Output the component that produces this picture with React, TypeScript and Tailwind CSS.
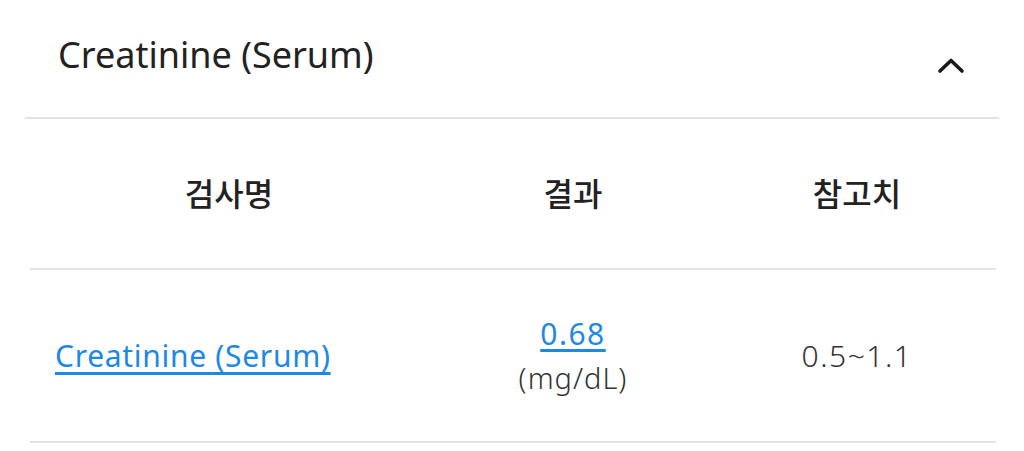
import React from 'react';

export default function App() {
    return (
        <div className="w-[1024px] h-[451px] bg-white overflow-hidden font-['Noto_Sans','Noto_Sans_CJK_KR',sans-serif] text-[#222]">
            {/* Accordion header */}
            <div className="mx-[25px] flex items-center justify-between h-[119px] border-b-2 border-[#e4e4e4]">
                <h2 className="pl-[33px] pb-[8px] text-[36px] leading-none text-[#222]">Creatinine (Serum)</h2>
                <svg className="mr-[34px] mt-[12px]" width="28" height="18" viewBox="0 0 28 18" fill="none">
                    <path d="M3 15 L14 4.5 L25 15" stroke="#1a1a1a" strokeWidth="3.6" strokeLinecap="round" strokeLinejoin="round" />
                </svg>
            </div>

            {/* Result table */}
            <div className="ml-[30px] mr-[28px]">
                <div className="grid grid-cols-[398px_290px_1fr] h-[151px] items-center border-b-2 border-[#e4e4e4] text-[32px] font-medium text-[#222]">
                    <div className="text-center">검사명</div>
                    <div className="text-center">결과</div>
                    <div className="text-center">참고치</div>
                </div>
                <div className="grid grid-cols-[398px_290px_1fr] h-[173px] items-center border-b-2 border-[#e4e4e4]">
                    <div className="pl-[25px]">
                        <a href="#" className="text-[30px] tracking-[0.7px] text-[#1e88e5] underline underline-offset-[5px] decoration-[3px]">Creatinine (Serum)</a>
                    </div>
                    <div className="flex flex-col items-center">
                        <a href="#" className="text-[30px] leading-[44px] tracking-[1.5px] text-[#1e88e5] underline underline-offset-[4px] decoration-[3px]">0.68</a>
                        <span className="text-[29px] leading-[44px] font-light tracking-[1px] text-[#333]">(mg/dL)</span>
                    </div>
                    <div className="text-center text-[30px] font-light tracking-[1.5px] text-[#333]">0.5~1.1</div>
                </div>
            </div>
        </div>
    );
}
